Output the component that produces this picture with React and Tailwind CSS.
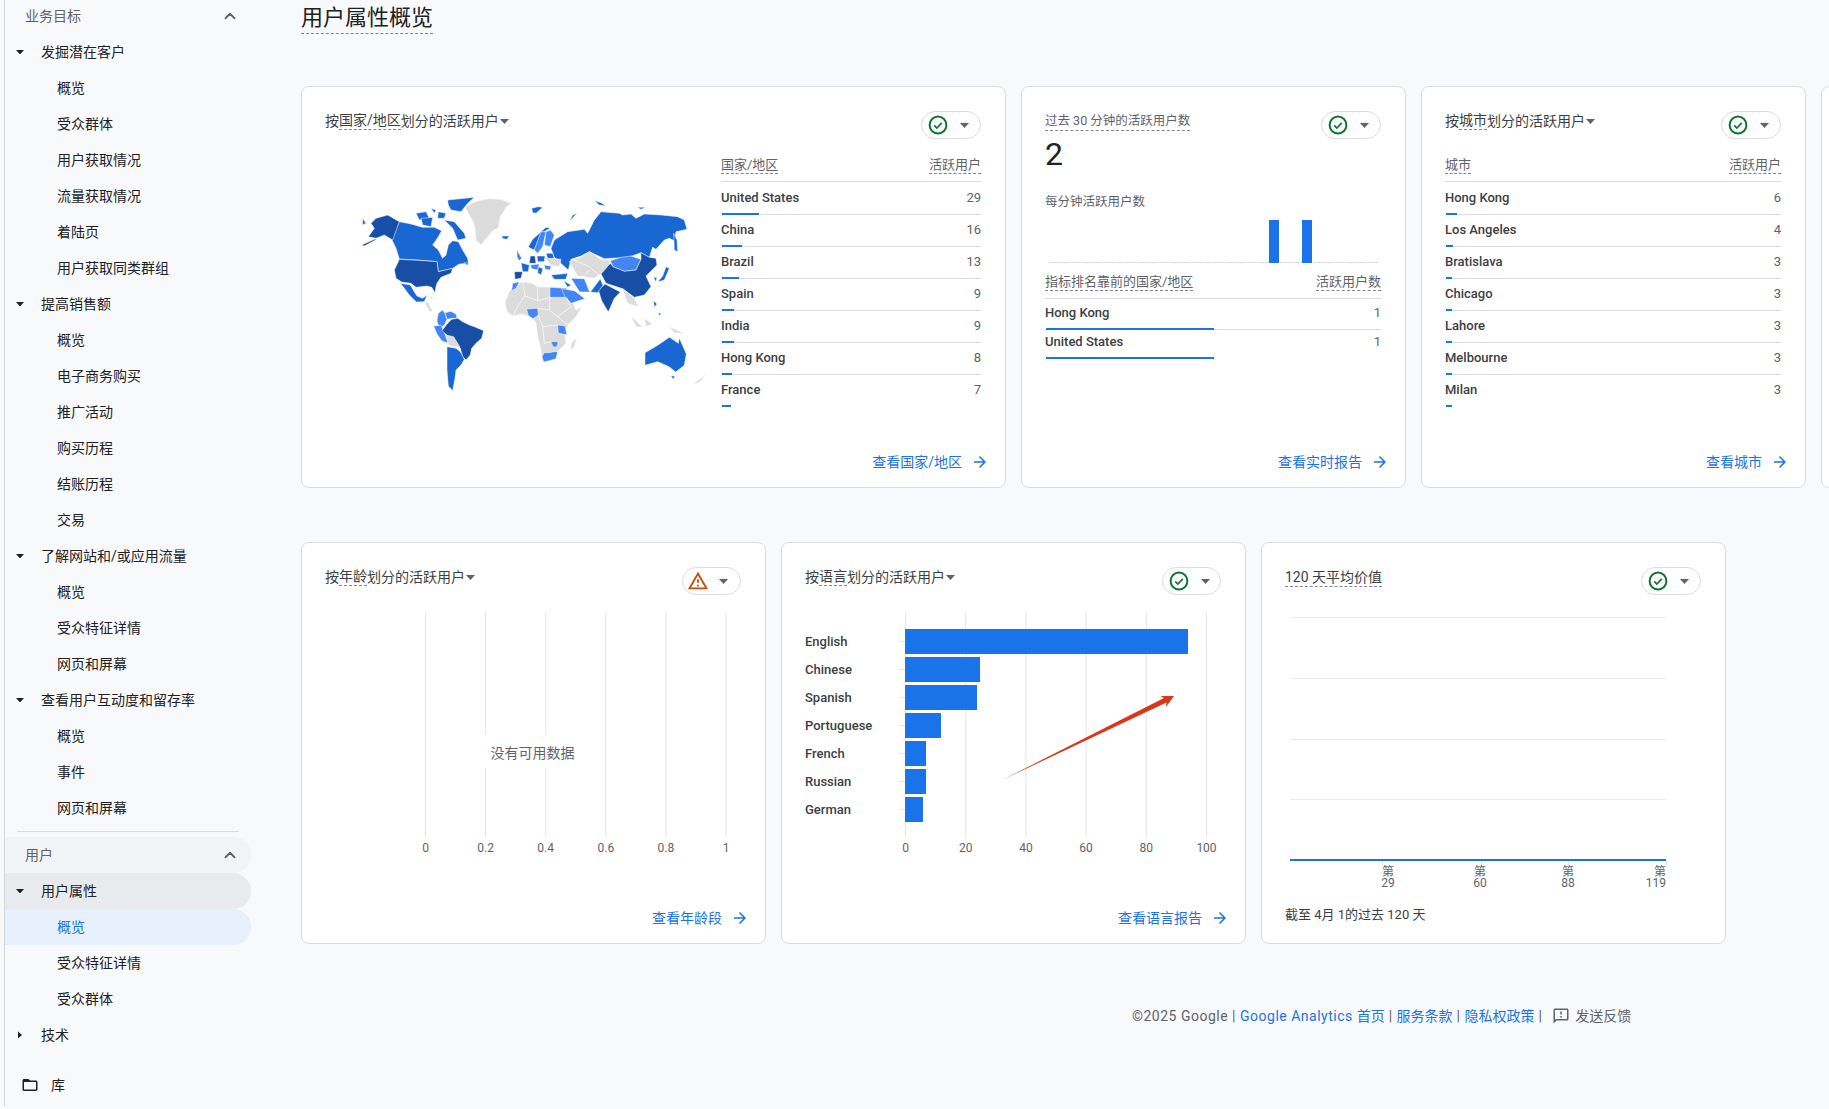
import React from "react";
import { ChevronUp } from "lucide-react";

const DARK = "#174ea6";
const MID = "#1967d2";
const LIGHT = "#4285f4";
const GRAY = "#dcdcdc";

const LAND = [
  // Greenland
  [GRAY, "372,112 395,98 420,90 445,86 480,88 512,100 495,112 488,125 478,140 472,175 455,182 445,195 420,225 405,212 402,175 396,155 385,135"],
  // Canada
  [MID, "175,155 210,162 245,172 280,172 302,182 292,200 275,225 292,240 305,265 315,255 322,225 335,212 352,215 365,240 380,265 382,280 355,282 335,295 292,305 288,275 230,270 175,267 165,235 152,208"],
  [MID, "225,130 255,125 265,145 235,150"],
  [MID, "240,145 275,142 270,170 245,165"],
  [MID, "292,125 315,130 310,145 290,145"],
  [MID, "320,90 400,82 380,100 360,125 330,120 322,105"],
  [MID, "310,150 340,155 370,190 375,205 350,210 335,175"],
  [MID, "270,115 285,120 280,130"],
  [MID, "370,278 384,280 378,286"],
  // Alaska
  [DARK, "105,145 140,135 175,155 155,210 130,195 105,205 82,200 100,175 90,160"],
  [DARK, "62,225 100,208 108,208 70,228"],
  [MID, "65,145 75,160 65,165"],
  // USA
  [DARK, "175,268 230,271 288,275 292,305 335,295 330,310 300,322 288,340 285,350 282,368 272,352 258,348 240,350 225,352 210,340 182,336 165,325 160,300"],
  // Mexico
  [MID, "178,340 208,345 218,362 228,378 245,385 258,375 250,395 226,396 205,375 190,355"],
  // Central America / Caribbean
  [GRAY, "250,395 262,398 276,425 266,425"],
  [GRAY, "262,378 285,385 270,386"],
  // Colombia + Venezuela
  [LIGHT, "288,450 292,430 305,420 312,430 318,448 312,462 302,472 290,462"],
  [LIGHT, "312,428 330,424 345,432 348,445 335,445 318,448"],
  // Peru / Ecuador
  [LIGHT, "278,468 300,466 312,492 322,520 302,512 288,492"],
  // Brazil
  [DARK, "303,482 318,462 332,448 350,445 365,455 385,465 400,470 428,482 422,505 405,520 392,535 388,555 375,570 365,560 358,535 345,515 322,500 312,490"],
  // Bolivia / Paraguay
  [GRAY, "315,495 338,500 356,530 345,532 322,526"],
  // Chile Argentina
  [MID, "318,530 345,535 358,545 370,568 360,585 345,600 342,625 335,662 322,648 318,600"],
  // Africa
  [GRAY, "492,395 505,365 520,345 545,335 575,340 590,350 627,352 677,355 690,385 705,420 722,412 705,440 680,465 672,495 675,520 650,545 625,552 605,575 598,530 590,500 585,460 575,445 545,432 515,438 498,425"],
  [GRAY, "688,540 692,518 708,503 700,530"],
  [LIGHT, "515,340 535,335 525,355 512,362"],
  [LIGHT, "627,352 677,355 677,382 627,382"],
  [LIGHT, "557,417 590,415 592,435 576,446 562,436"],
  [LIGHT, "650,465 672,468 678,494 652,490"],
  [LIGHT, "630,515 652,515 646,532 636,530"],
  [LIGHT, "603,560 610,548 625,548 640,545 650,545 645,566 625,572 608,576"],
  // Russia
  [MID, "630,235 640,210 680,185 730,178 740,190 760,150 780,125 835,130 845,135 870,132 885,145 910,132 960,135 1010,140 1030,150 1038,178 1005,185 1000,212 985,205 970,210 945,238 935,232 925,262 900,248 862,262 790,266 745,245 720,258 690,268 682,300 662,282 640,262"],
  [MID, "680,160 708,130 695,135 685,155"],
  [MID, "760,92 780,98 795,108 775,105"],
  [MID, "572,115 592,110 605,112 585,130 575,128"],
  [MID, "888,112 915,112 900,118"],
  [MID, "998,190 1008,210 1010,245 1000,240"],
  // Iceland
  [MID, "482,198 505,198 498,208 486,206"],
  // Central Asia
  [GRAY, "685,275 720,262 745,245 780,268 810,272 795,300 760,325 710,318"],
  // Mongolia
  [LIGHT, "808,272 840,262 870,258 900,268 885,300 850,304 816,290"],
  // China
  [DARK, "780,312 808,280 816,290 850,304 885,300 900,268 900,248 925,262 945,265 948,285 915,318 930,350 910,375 880,382 845,356 795,340"],
  // India
  [DARK, "772,360 792,342 838,366 820,385 802,426 782,392"],
  // Pakistan
  [MID, "748,366 778,326 786,346 770,368"],
  // Iran
  [LIGHT, "690,325 730,326 746,366 716,366"],
  // Saudi
  [LIGHT, "662,356 700,362 732,386 690,400 672,380"],
  [MID, "668,332 690,345 680,352"],
  // Turkey
  [MID, "630,315 680,310 675,328 640,328"],
  // Scandinavia
  [MID, "562,230 575,208 615,172 628,175 600,190 580,240 568,235"],
  [LIGHT, "580,240 600,185 615,185 605,230 590,250"],
  [LIGHT, "610,225 615,185 628,180 640,195 628,230"],
  // Europe
  [LIGHT, "528,240 542,265 535,272 528,262"],
  [GRAY, "610,262 660,268 655,290 628,285"],
  [DARK, "520,305 545,305 540,325 522,328"],
  [MID, "540,278 565,285 562,305 545,305"],
  [DARK, "568,258 582,258 585,280 565,280"],
  [MID, "588,258 612,258 610,275 590,275"],
  [MID, "615,250 635,250 640,265 620,265"],
  [LIGHT, "568,285 595,282 590,300 572,296"],
  [LIGHT, "610,285 630,288 628,300 612,298"],
  [MID, "592,290 606,296 600,315 590,308"],
  // SE Asia
  [GRAY, "845,356 880,384 892,410 875,405 860,400 850,375"],
  [GRAY, "870,438 905,472 885,470"],
  [GRAY, "910,445 935,462 915,470"],
  [GRAY, "985,470 1030,490 1000,488"],
  [MID, "938,392 948,402 940,412"],
  [MID, "952,428 960,430 955,438"],
  // Japan Korea
  [MID, "975,290 985,295 970,330 950,336 965,318"],
  [MID, "938,320 948,325 943,335"],
  // Australia
  [MID, "912,548 950,526 985,502 998,510 1012,520 1015,504 1036,552 1030,586 1004,606 984,590 950,575 912,586"],
  [MID, "990,618 1002,618 996,628"],
  [GRAY, "1052,645 1096,612 1076,636"],
];

const BORDERS = [
  "545,335 552,378 590,392 590,350",
  "590,392 627,382",
  "552,378 530,410 515,438",
  "590,415 625,420 650,440 680,465",
  "627,382 625,420",
  "677,382 690,410 650,440",
  "592,435 605,470 650,465",
  "605,470 610,520 630,515",
  "700,270 745,290 780,322",
  "722,326 745,300",
];

function WorldMap() {
  return (
    <svg width="380" height="240" viewBox="0 0 1140 720" className="shrink-0">
      {LAND.map(([fill, points], i) => (
        <polygon key={i} points={points} fill={fill} stroke="#ffffff" strokeWidth="1.5" strokeLinejoin="round" />
      ))}
      {BORDERS.map((points, i) => (
        <polyline key={i} points={points} fill="none" stroke="#ffffff" strokeWidth="2" />
      ))}
    </svg>
  );
}

function Caret({ right = false, small = false, className = "", fill = "#202124" }) {
  if (right) {
    return (
      <svg width="4" height="8" viewBox="0 0 5 9" className={className}>
        <path d="M0 0l5 4.5L0 9z" fill={fill} />
      </svg>
    );
  }
  return (
    <svg width={small ? 8 : 9} height={small ? 4.5 : 5} viewBox="0 0 9 5" className={className}>
      <path d="M0 0h9L4.5 5z" fill={fill} />
    </svg>
  );
}

function Arrow() {
  return (
    <svg width="18" height="18" viewBox="0 0 24 24" fill="#1a73e8">
      <path d="M12 4l-1.41 1.41L16.17 11H4v2h12.17l-5.58 5.59L12 20l8-8z" />
    </svg>
  );
}

function Pill({ warn = false, width = "w-[60px]" }) {
  return (
    <div className={`flex h-7 ${width} shrink-0 items-center rounded-full border border-[#dadce0] bg-white ${warn ? "pl-[4px]" : "pl-[6px]"}`}>
      {warn ? (
        <svg width="22" height="22" viewBox="0 0 24 24" fill="#c5500e">
          <path d="M12 5.99L19.53 19H4.47L12 5.99M12 2L1 21h22L12 2zm1 14h-2v2h2v-2zm0-6h-2v4h2v-4z" />
        </svg>
      ) : (
        <svg width="20" height="20" viewBox="0 0 20 20" fill="none" stroke="#137333" strokeWidth="2">
          <circle cx="10" cy="10" r="8.4" />
          <path d="M6.2 10.4l2.6 2.6 5-5.2" strokeWidth="1.7" />
        </svg>
      )}
      <Caret fill="#5f6368" className={warn ? "ml-[10px]" : "ml-3"} />
    </div>
  );
}

function Dash({ children, className = "" }) {
  return <span className={`inline-block border-b border-dashed border-[#80868b] ${className}`}>{children}</span>;
}

function Title({ before, mark, after }) {
  return (
    <div className="flex items-start text-sm leading-[18px] text-[#3c4043]">
      <span className="mt-px">{before}</span>
      <Dash className="mt-px leading-[17px]">{mark}</Dash>
      <span className="mt-px">{after}</span>
      <Caret fill="#5f6368" className="ml-px mt-[8px]" />
    </div>
  );
}

function Card({ className, children }) {
  return (
    <div className={`flex h-[402px] shrink-0 flex-col rounded-lg border border-[#dadce0] bg-white pl-[23px] pr-6 pt-6 ${className}`}>
      {children}
    </div>
  );
}

function Link({ text }) {
  return (
    <div className="-mr-2 mb-[15px] mt-auto flex items-center justify-end gap-[9px] text-sm leading-5 text-[#1a73e8]">
      <span>{text}</span>
      <Arrow />
    </div>
  );
}

function Track({ w, line = true, thin = false }) {
  return (
    <div className={`flex h-[2px] items-center ${thin ? "-mb-[2px]" : "-mb-px"}`}>
      <div className="ml-px h-[2px] bg-[#1a73e8]" style={{ width: w }} />
      {line && <div className="h-px flex-1 bg-[#dadce0]" />}
    </div>
  );
}

function DataTable({ col1, col2, rows, className = "" }) {
  return (
    <div className={`text-[13px] ${className}`}>
      <div className="flex items-start justify-between border-b border-[#dadce0] pb-[7px] text-[#5f6368]">
        <Dash className="leading-4">{col1}</Dash>
        <Dash className="leading-4">{col2}</Dash>
      </div>
      {rows.map(([name, val, w], i) => (
        <div key={name}>
          <div className="box-content flex h-5 items-center justify-between pt-[6px] font-medium text-[#3c4043]">
            <span>{name}</span>
            <span className="font-normal text-[#5f6368]">{val}</span>
          </div>
          <div className="h-[5px]" />
          <Track w={w} line={i < rows.length - 1} />
        </div>
      ))}
    </div>
  );
}

const countries = [
  ["United States", 29, 37],
  ["China", 16, 20],
  ["Brazil", 13, 17],
  ["Spain", 9, 12],
  ["India", 9, 12],
  ["Hong Kong", 8, 10],
  ["France", 7, 9],
];
const cities = [
  ["Hong Kong", 6, 11],
  ["Los Angeles", 4, 7],
  ["Bratislava", 3, 6],
  ["Chicago", 3, 6],
  ["Lahore", 3, 6],
  ["Melbourne", 3, 6],
  ["Milan", 3, 6],
];

function MiniChart() {
  const cells = Array.from({ length: 30 }, (_, i) => i);
  return (
    <svg width="335" height="44" className="mt-[10px] block">
      {cells.map((i) => (
        <rect key={i} x={4 + i * 11} y="42" width="10" height="1" fill="#dadce0" />
      ))}
      <rect x="224" y="0" width="10" height="43" fill="#1a73e8" />
      <rect x="257" y="0" width="10" height="43" fill="#1a73e8" />
    </svg>
  );
}

const tickText = { fontSize: 12, fill: "#5f6368", textAnchor: "middle", dominantBaseline: "central" };

function AgeChart() {
  const labels = ["0", "0.2", "0.4", "0.6", "0.8", "1"];
  return (
    <svg width="416" height="246" className="mt-[17px] block">
      {labels.map((l, i) => {
        const x = 100.5 + i * 60.1;
        return (
          <g key={l}>
            <line x1={x} x2={x} y1="0" y2="225" stroke="#e4e5e7" />
            <text x={x} y="236" {...tickText}>{l}</text>
          </g>
        );
      })}
      <rect x="152" y="123" width="111" height="33" fill="#ffffff" />
      <text x="207.5" y="141" fontSize="14" fill="#5f6368" textAnchor="middle" dominantBaseline="central">没有可用数据</text>
    </svg>
  );
}

function LangChart() {
  const langs = [
    ["English", 283],
    ["Chinese", 75],
    ["Spanish", 72],
    ["Portuguese", 36],
    ["French", 21],
    ["Russian", 21],
    ["German", 18],
  ];
  const labels = ["0", "20", "40", "60", "80", "100"];
  return (
    <svg width="416" height="246" className="mt-[17px] block overflow-visible">
      {labels.map((l, i) => {
        const x = 100.5 + i * 60.2;
        return (
          <g key={l}>
            <line x1={x} x2={x} y1="0" y2="225" stroke="#e4e5e7" />
            <text x={x} y="236" {...tickText}>{l}</text>
          </g>
        );
      })}
      {langs.map(([name, w], i) => {
        const y = 17 + i * 28;
        return (
          <g key={name}>
            <text x="0" y={y + 12.5} fontSize="13" fontWeight="500" fill="#3c4043" dominantBaseline="central">{name}</text>
            <line x1="94" x2="100" y1={y + 12.5} y2={y + 12.5} stroke="#e4e5e7" />
            <rect x="100" y={y} width={w} height="25" fill="#1a73e8" />
          </g>
        );
      })}
      <polygon points="197,168 359,86 355.5,84 369,84 361,95 361.5,90.5" fill="#d9371a" />
    </svg>
  );
}

function ValueChart() {
  const ys = [5, 66, 127, 187];
  const ticks = [
    [97, 103, "29", "middle"],
    [196, 195, "60", "middle"],
    [283, 283, "88", "middle"],
    [381, 381, "119", "end"],
  ];
  return (
    <svg width="415" height="280" className="mt-[17px] block">
      {ys.map((y) => (
        <line key={y} x1="5" x2="381" y1={y + 0.5} y2={y + 0.5} stroke="#e9eaec" />
      ))}
      {ticks.map(([x]) => (
        <line key={x} x1={x + 0.5} x2={x + 0.5} y1="248" y2="254" stroke="#e4e5e7" />
      ))}
      <rect x="5" y="247" width="376" height="2" fill="#1a73e8" />
      {ticks.map(([x, tx, n, anchor]) => (
        <g key={n} fontSize="12" fill="#5f6368">
          <text x={anchor === "end" ? 381 : tx} y="260" textAnchor={anchor === "end" ? "end" : "middle"} dominantBaseline="central">第</text>
          <text x={tx} y="271" textAnchor={anchor} dominantBaseline="central">{n}</text>
        </g>
      ))}
    </svg>
  );
}

function NavRow({ level, label, open = true, active = false, group = false }) {
  const bg = active ? "bg-[#e8f0fe] text-[#1a73e8]" : group ? "bg-[#e8eaed]" : "";
  if (level === 1) {
    return (
      <div className={`flex h-9 items-center rounded-r-full pl-[11px] text-sm text-[#202124] ${bg}`}>
        <span className="flex w-2 justify-center">
          {open ? <Caret small /> : <Caret right />}
        </span>
        <span className="ml-[17px]">{label}</span>
      </div>
    );
  }
  return (
    <div className={`flex h-9 items-center rounded-r-full pl-[52px] text-sm ${active ? "" : "text-[#202124]"} ${bg}`}>
      {label}
    </div>
  );
}

function Section({ label, className = "" }) {
  return (
    <div className={`flex items-center justify-between rounded-r-full pl-5 pr-[12px] text-sm text-[#5f6368] ${className}`}>
      <span>{label}</span>
      <ChevronUp size={18} strokeWidth={2.4} color="#5f6368" />
    </div>
  );
}

const NAV = [
  [1, "发掘潜在客户"], [2, "概览"], [2, "受众群体"], [2, "用户获取情况"], [2, "流量获取情况"], [2, "着陆页"], [2, "用户获取同类群组"],
  [1, "提高销售额"], [2, "概览"], [2, "电子商务购买"], [2, "推广活动"], [2, "购买历程"], [2, "结账历程"], [2, "交易"],
  [1, "了解网站和/或应用流量"], [2, "概览"], [2, "受众特征详情"], [2, "网页和屏幕"],
  [1, "查看用户互动度和留存率"], [2, "概览"], [2, "事件"], [2, "网页和屏幕"],
];

function Sidebar() {
  return (
    <aside className="ml-1 h-[1106px] w-[247px] shrink-0 border-l border-[#d4d6da]">
      <Section label="业务目标" className="h-[34px] pb-[2px]" />
      {NAV.map(([lv, label], i) => (
        <NavRow key={i} level={lv} label={label} />
      ))}
      <div className="mx-3 my-[5px] h-px bg-[#dadce0]" />
      <Section label="用户" className="h-9 bg-[#f1f3f4] pb-px" />
      <NavRow level={1} label="用户属性" group />
      <NavRow level={2} label="概览" active />
      <NavRow level={2} label="受众特征详情" />
      <NavRow level={2} label="受众群体" />
      <NavRow level={1} label="技术" open={false} />
      <div className="mt-[14px] flex h-9 items-center pl-4 text-sm text-[#202124]">
        <svg width="18" height="18" viewBox="0 0 24 24" fill="#202124">
          <path d="M20 6h-8l-2-2H4c-1.1 0-1.99.9-1.99 2L2 18c0 1.1.9 2 2 2h16c1.1 0 2-.9 2-2V8c0-1.1-.9-2-2-2zm0 12H4V8h16v10z" />
        </svg>
        <span className="ml-3">库</span>
      </div>
    </aside>
  );
}

export default function App() {
  return (
    <div className="flex h-[1109px] w-full overflow-hidden bg-[#f8f9fb] [font-family:Roboto,'Noto_Sans_CJK_SC',sans-serif]">
      <Sidebar />
      <main className="min-w-0 flex-1 pl-[50px]">
        <div className="mt-[3px]">
          <Dash className="text-[22px] leading-[30px] text-[#202124]">用户属性概览</Dash>
        </div>

        <div className="mt-[52px] flex gap-[15px]">
          <Card className="w-[705px]">
            <div className="flex items-start justify-between">
              <Title before="按" mark="国家/地区" after="划分的活跃用户" />
              <Pill />
            </div>
            <div className="flex items-start justify-between">
              <div className="ml-4 mt-[31px]"><WorldMap /></div>
              <DataTable col1="国家/地区" col2="活跃用户" rows={countries} className="mt-[18px] w-[263px]" />
            </div>
            <Link text="查看国家/地区" />
          </Card>

          <Card className="w-[385px]">
            <div className="flex items-start justify-between">
              <div>
                <Dash className="!block mt-px w-fit text-[12.5px] leading-[18px] text-[#5f6368]">过去 30 分钟的活跃用户数</Dash>
                <div className="mt-[5px] text-[32px] leading-9 text-[#202124]">2</div>
              </div>
              <Pill width="w-[60px]" />
            </div>
            <div className="mt-[22px] text-[12.5px] leading-4 text-[#5f6368]">每分钟活跃用户数</div>
            <MiniChart />
            <div className="mt-[10px] text-[13px]">
              <div className="flex items-start justify-between border-b border-[#dadce0] pb-[7px] text-[#5f6368]">
                <Dash className="leading-4">指标排名靠前的国家/地区</Dash>
                <Dash className="leading-4">活跃用户数</Dash>
              </div>
              {[["Hong Kong", true], ["United States", false]].map(([n, line]) => (
                <div key={n}>
                  <div className="box-content flex h-5 items-center justify-between pt-1 font-medium text-[#3c4043]">
                    <span>{n}</span>
                    <span className="font-normal text-[#5f6368]">1</span>
                  </div>
                  <div className="h-[5px]" />
                  <Track w={168} line={line} thin />
                </div>
              ))}
            </div>
            <Link text="查看实时报告" />
          </Card>

          <Card className="w-[385px]">
            <div className="flex items-start justify-between">
              <Title before="按" mark="城市" after="划分的活跃用户" />
              <Pill />
            </div>
            <DataTable col1="城市" col2="活跃用户" rows={cities} className="mt-[18px]" />
            <Link text="查看城市" />
          </Card>

          <Card className="w-[385px]">
            <div />
          </Card>
        </div>

        <div className="mt-[54px] flex gap-[15px]">
          <Card className="w-[465px]">
            <div className="flex items-start justify-between">
              <Title before="按" mark="年龄" after="划分的活跃用户" />
              <Pill warn width="w-[59px]" />
            </div>
            <AgeChart />
            <Link text="查看年龄段" />
          </Card>

          <Card className="w-[465px]">
            <div className="flex items-start justify-between">
              <Title before="按" mark="语言" after="划分的活跃用户" />
              <Pill width="w-[59px]" />
            </div>
            <LangChart />
            <Link text="查看语言报告" />
          </Card>

          <Card className="w-[465px]">
            <div className="flex items-start justify-between">
              <Dash className="mt-px text-sm leading-[18px] text-[#3c4043]">120 天平均价值</Dash>
              <Pill width="w-[60px]" />
            </div>
            <ValueChart />
            <div className="mt-[13px] text-[13px] leading-5 text-[#3c4043]">截至 4月 1的过去 120 天</div>
          </Card>
        </div>

        <div className="mt-[62px] flex items-center whitespace-pre pl-[831px] text-sm leading-5 text-[#5f6368]">
          <span className="tracking-[0.5px]">©2025 Google | </span>
          <span className="text-[#1a73e8]"><span className="tracking-[0.5px]">Google Analytics </span>首页</span>
          <span className="tracking-[0.5px]"> | </span>
          <span className="text-[#1a73e8]">服务条款</span>
          <span className="tracking-[0.5px]"> | </span>
          <span className="text-[#1a73e8]">隐私权政策</span>
          <span className="tracking-[0.5px]"> | </span>
          <svg width="18" height="18" viewBox="0 0 24 24" fill="#5f6368" className="ml-[6px]">
            <path d="M20 2H4c-1.1 0-1.99.9-1.99 2L2 22l4-4h14c1.1 0 2-.9 2-2V4c0-1.1-.9-2-2-2zm0 14H5.17L4 17.17V4h16v12zM11 12h2v2h-2zm0-6h2v4h-2z" />
          </svg>
          <span className="ml-[5px]">发送反馈</span>
        </div>
      </main>
    </div>
  );
}
